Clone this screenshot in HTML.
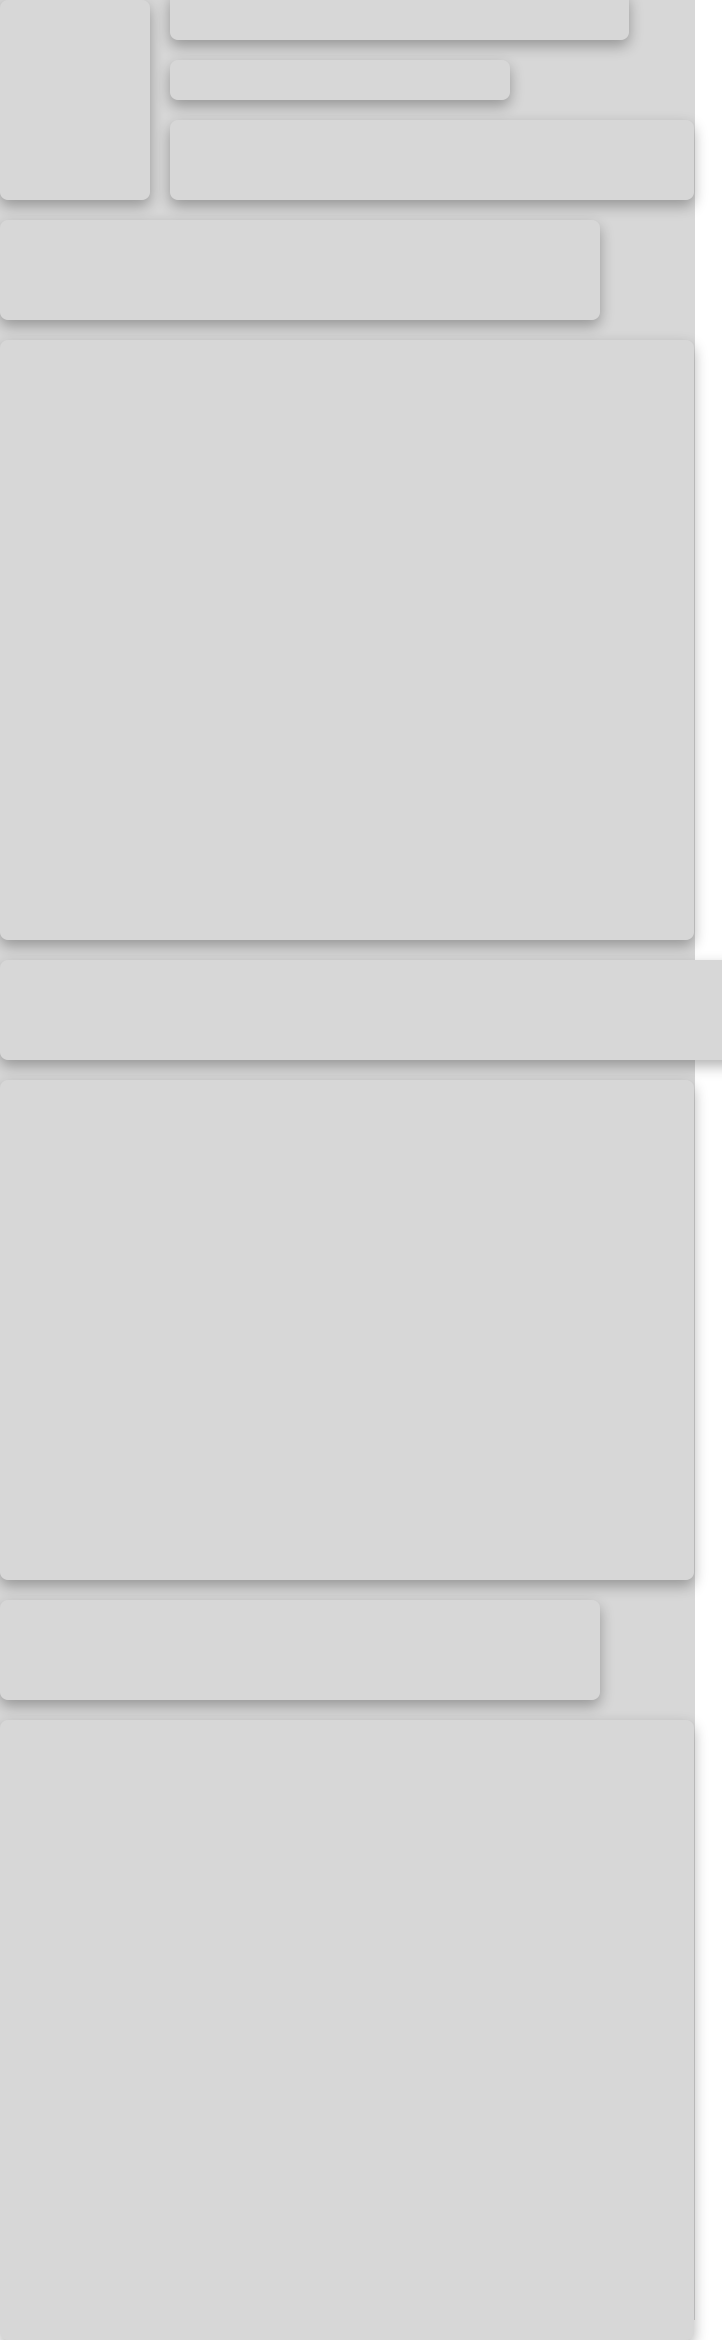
<!DOCTYPE html>
<html><head><meta charset="utf-8"><style>
html,body{margin:0;padding:0;background:#fff;width:722px;height:2320px;overflow:hidden;font-family:"Liberation Sans",sans-serif}
.wrap{position:absolute;left:0;top:0;width:695px;height:2320px;background:#d7d7d7}
.b{position:absolute;background:#d7d7d7;border-radius:8px;box-shadow:0 6px 14px rgba(0,0,0,0.3)}
</style></head><body>
<div class="wrap"></div>
<div class="b" style="left:0;top:0;width:150px;height:200px"></div>
<div class="b" style="left:170px;top:-8px;width:459px;height:48px"></div>
<div class="b" style="left:170px;top:60px;width:340px;height:40px"></div>
<div class="b" style="left:170px;top:120px;width:524px;height:80px"></div>
<div class="b" style="left:0;top:220px;width:600px;height:100px"></div>
<div class="b" style="left:0;top:340px;width:694px;height:600px"></div>
<div class="b" style="left:0;top:960px;width:740px;height:100px"></div>
<div class="b" style="left:0;top:1080px;width:694px;height:500px"></div>
<div class="b" style="left:0;top:1600px;width:600px;height:100px"></div>
<div class="b" style="left:0;top:1720px;width:694px;height:620px"></div>
</body></html>
